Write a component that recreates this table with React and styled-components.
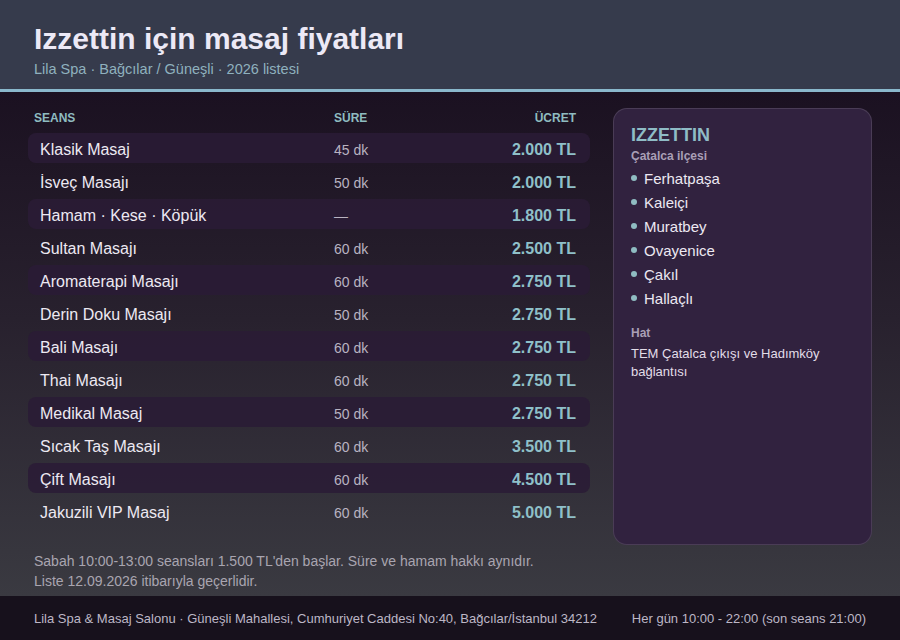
import styled, { createGlobalStyle } from "styled-components";

const GlobalStyle = createGlobalStyle`
  * {
    box-sizing: border-box;
  }

  html,
  body {
    margin: 0;
    padding: 0;
    height: 100%;
  }

  body {
    font-family: "Liberation Sans", Arial, sans-serif;
    background: #1a1120;
  }
`;

const SESSIONS = [
  { name: "Klasik Masaj", time: "45 dk", price: "2.000 TL" },
  { name: "İsveç Masajı", time: "50 dk", price: "2.000 TL" },
  { name: "Hamam · Kese · Köpük", time: "—", price: "1.800 TL" },
  { name: "Sultan Masajı", time: "60 dk", price: "2.500 TL" },
  { name: "Aromaterapi Masajı", time: "60 dk", price: "2.750 TL" },
  { name: "Derin Doku Masajı", time: "50 dk", price: "2.750 TL" },
  { name: "Bali Masajı", time: "60 dk", price: "2.750 TL" },
  { name: "Thai Masajı", time: "60 dk", price: "2.750 TL" },
  { name: "Medikal Masaj", time: "50 dk", price: "2.750 TL" },
  { name: "Sıcak Taş Masajı", time: "60 dk", price: "3.500 TL" },
  { name: "Çift Masajı", time: "60 dk", price: "4.500 TL" },
  { name: "Jakuzili VIP Masaj", time: "60 dk", price: "5.000 TL" },
];

const AREAS = ["Ferhatpaşa", "Kaleiçi", "Muratbey", "Ovayenice", "Çakıl", "Hallaçlı"];

const Page = styled.div`
  display: flex;
  flex-direction: column;
  height: 100vh;
`;

const Header = styled.header`
  height: 92px;
  padding: 21px 34px 0;
  background: #363b4c;
  border-bottom: 3px solid #8ab8cc;
`;

const Title = styled.h1`
  margin: 0;
  font-size: 30px;
  line-height: 36px;
  font-weight: bold;
  color: #ece9f6;
`;

const Subtitle = styled.p`
  margin: 3px 0 0;
  font-size: 14.5px;
  line-height: 18px;
  color: #8fb1be;
`;

const Main = styled.main`
  flex: 1;
  display: flex;
  flex-direction: column;
  padding: 16px 28px 0;
  background: linear-gradient(180deg, #1b1121 0%, #28212e 45%, #3a3a41 100%);
`;

const Content = styled.div`
  display: grid;
  grid-template-columns: 562px 259px;
  column-gap: 23px;
  align-items: stretch;
`;

const Table = styled.div`
  display: flex;
  flex-direction: column;
  gap: 3px;
  padding: 3px 0 19px;
`;

const Row = styled.div`
  display: grid;
  grid-template-columns: ${(p) => p.$first}px 1fr auto;
  align-items: center;
  height: 30px;
  padding: 3px 14px 0 ${(p) => p.$pad}px;
  border-radius: 8px;
  background: ${(p) => (p.$shade ? "rgba(42, 27, 54, 0.88)" : "transparent")};
`;

const HeadRow = styled(Row)`
  height: 14px;
  padding-top: 0;
  margin-bottom: 5px;
`;

const HeadCell = styled.span`
  font-size: 12px;
  line-height: 14px;
  font-weight: bold;
  color: #8fbcc0;
  text-align: ${(p) => p.$align || "left"};
`;

const Name = styled.span`
  font-size: 16px;
  color: #ede9f2;
`;

const Time = styled.span`
  font-size: 14px;
  color: #b9b3c1;
`;

const Price = styled.span`
  font-size: 16px;
  font-weight: bold;
  color: #8fc0c9;
  text-align: right;
`;

const Card = styled.aside`
  padding: 16px 17px;
  background: #31223f;
  border: 1px solid rgba(255, 255, 255, 0.12);
  border-radius: 14px;
`;

const CardTitle = styled.h2`
  margin: 0;
  font-size: 18px;
  line-height: 20px;
  font-weight: bold;
  color: #8fbcc6;
`;

const CardLabel = styled.div`
  margin-top: ${(p) => p.$top}px;
  font-size: 12px;
  line-height: 14px;
  font-weight: bold;
  color: #a99fb6;
`;

const AreaList = styled.ul`
  list-style: none;
  margin: 3px 0 0;
  padding: 0;
`;

const Area = styled.li`
  display: flex;
  align-items: center;
  gap: 7px;
  height: 24px;
  font-size: 15px;
  color: #ece8f2;

  &::before {
    content: "";
    width: 6px;
    height: 6px;
    border-radius: 50%;
    background: #8fbcc2;
  }
`;

const CardText = styled.p`
  margin: 5px 0 0;
  font-size: 13px;
  line-height: 18px;
  color: #e2dde8;
`;

const Notes = styled.div`
  margin-top: 6px;
  padding-left: 6px;
  font-size: 14px;
  line-height: 20px;
  color: #a9a5b0;
`;

const Footer = styled.footer`
  display: flex;
  align-items: center;
  justify-content: space-between;
  height: 44px;
  padding: 0 34px;
  background: #17111c;
  font-size: 13px;
  color: #bdb7c6;
`;

export default function App() {
  return (
    <Page>
      <GlobalStyle />
      <Header>
        <Title>Izzettin için masaj fiyatları</Title>
        <Subtitle>Lila Spa · Bağcılar / Güneşli · 2026 listesi</Subtitle>
      </Header>
      <Main>
        <Content>
          <Table>
            <HeadRow $first={300} $pad={6}>
              <HeadCell>SEANS</HeadCell>
              <HeadCell>SÜRE</HeadCell>
              <HeadCell $align="right">ÜCRET</HeadCell>
            </HeadRow>
            {SESSIONS.map((s, i) => (
              <Row key={s.name} $first={294} $pad={12} $shade={i % 2 === 0}>
                <Name>{s.name}</Name>
                <Time>{s.time}</Time>
                <Price>{s.price}</Price>
              </Row>
            ))}
          </Table>
          <Card>
            <CardTitle>IZZETTIN</CardTitle>
            <CardLabel $top={4}>Çatalca ilçesi</CardLabel>
            <AreaList>
              {AREAS.map((a) => (
                <Area key={a}>{a}</Area>
              ))}
            </AreaList>
            <CardLabel $top={16}>Hat</CardLabel>
            <CardText>TEM Çatalca çıkışı ve Hadımköy bağlantısı</CardText>
          </Card>
        </Content>
        <Notes>
          Sabah 10:00-13:00 seansları 1.500 TL'den başlar. Süre ve hamam hakkı aynıdır.
          <br />
          Liste 12.09.2026 itibarıyla geçerlidir.
        </Notes>
      </Main>
      <Footer>
        <span>Lila Spa &amp; Masaj Salonu · Güneşli Mahallesi, Cumhuriyet Caddesi No:40, Bağcılar/İstanbul 34212</span>
        <span>Her gün 10:00 - 22:00 (son seans 21:00)</span>
      </Footer>
    </Page>
  );
}
